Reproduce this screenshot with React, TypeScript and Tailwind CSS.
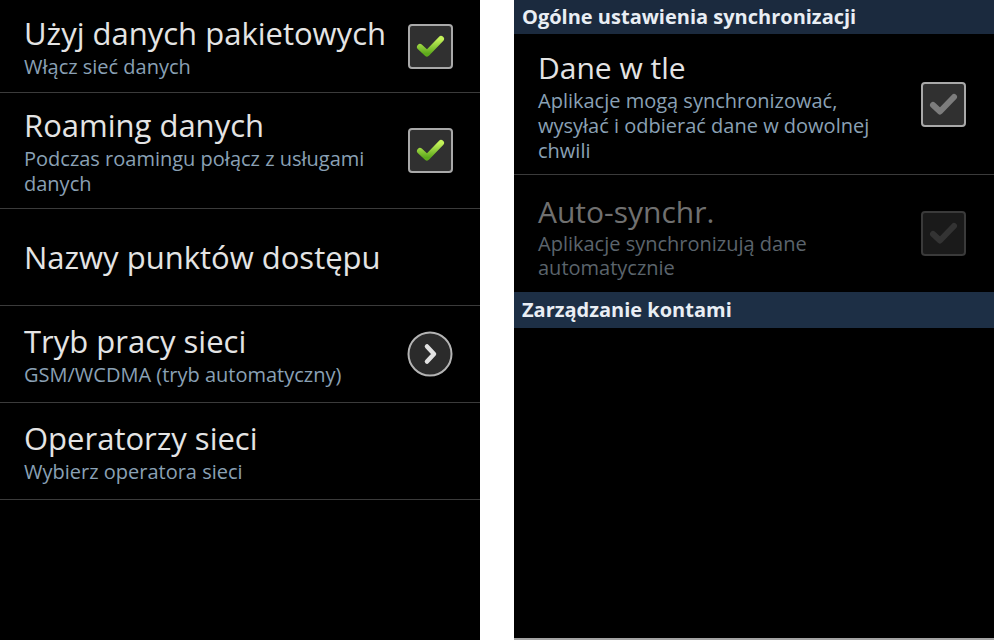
import React from "react";

type Tone = "green" | "gray" | "off";

const CheckBox = ({ tone }: { tone: Tone }) => {
  const box =
    tone === "off"
      ? "border-[#3a3a3a] bg-[#1a1a1a]"
      : "border-[#a9a9a9] bg-[#303030]";
  return (
    <div className={`w-[45px] h-[45px] shrink-0 rounded-[4px] border-2 ${box}`}>
      <svg width="41" height="41" viewBox="0 0 41 41">
        <defs>
          <linearGradient id="ok" x1="0" y1="0" x2="0" y2="1">
            <stop offset="0" stopColor="#c4f25a" />
            <stop offset="1" stopColor="#5ea91c" />
          </linearGradient>
        </defs>
        <polyline
          points="10,21 17,27.5 31,13"
          fill="none"
          stroke={tone === "green" ? "url(#ok)" : tone === "gray" ? "#7c7c7c" : "#333333"}
          strokeWidth="6"
          strokeLinecap="round"
          strokeLinejoin="round"
        />
      </svg>
    </div>
  );
};

const Chevron = () => (
  <svg width="46" height="46" viewBox="0 0 46 46" className="shrink-0">
    <circle cx="23" cy="23" r="21.5" fill="#2b2b2b" stroke="#b4b4b4" strokeWidth="2" />
    <polyline
      points="20,15.5 27,23 20,30.5"
      fill="none"
      stroke="#e2e2e2"
      strokeWidth="4.5"
      strokeLinecap="round"
      strokeLinejoin="round"
    />
  </svg>
);

const Row = ({
  height,
  title,
  lines = [],
  right,
}: {
  height: string;
  title: string;
  lines?: string[];
  right?: React.ReactNode;
}) => (
  <div className={`${height} flex items-center justify-between pl-6 pr-[27px] border-b border-[#3b3b3b]`}>
    <div className="flex flex-col">
      <div className="text-[31px] leading-[40px] text-[#e4e4e4] whitespace-nowrap">{title}</div>
      {lines.length > 0 && (
        <div className="mt-[1px] text-[20px] leading-[25px] text-[#8aa1b5]">
          {lines.map((l) => (
            <div key={l} className="whitespace-nowrap">
              {l}
            </div>
          ))}
        </div>
      )}
    </div>
    {right}
  </div>
);

export default function App() {
  return (
    <div
      className="w-[994px] h-[640px] flex bg-white overflow-hidden"
      style={{ fontFamily: '"Open Sans", "Noto Sans", sans-serif' }}
    >
      {/* left phone: mobile network settings */}
      <div className="w-[480px] h-full bg-black flex flex-col">
        <Row
          height="h-[93px]"
          title="Użyj danych pakietowych"
          lines={["Włącz sieć danych"]}
          right={<CheckBox tone="green" />}
        />
        <Row
          height="h-[116px]"
          title="Roaming danych"
          lines={["Podczas roamingu połącz z usługami", "danych"]}
          right={<CheckBox tone="green" />}
        />
        <Row height="h-[97px]" title="Nazwy punktów dostępu" />
        <Row
          height="h-[97px]"
          title="Tryb pracy sieci"
          lines={["GSM/WCDMA (tryb automatyczny)"]}
          right={<Chevron />}
        />
        <Row
          height="h-[97px]"
          title="Operatorzy sieci"
          lines={["Wybierz operatora sieci"]}
        />
      </div>

      <div className="w-[34px]" />

      {/* right phone: sync settings */}
      <div className="w-[480px] h-full bg-black flex flex-col border-b-2 border-[#a3a3a3]">
        <div className="h-[34px] bg-[#1b2a3e] pl-2 flex items-center text-[20px] font-bold text-[#e9eef4]">
          Ogólne ustawienia synchronizacji
        </div>
        <div className="h-[141px] flex items-center justify-between pl-6 pr-[28px] border-b border-[#3b3b3b]">
          <div className="flex flex-col pt-[3px]">
            <div className="text-[30px] leading-[40px] text-[#e4e4e4]">Dane w tle</div>
            <div className="text-[20px] leading-[25px] text-[#8aa1b5]">
              <div>Aplikacje mogą synchronizować,</div>
              <div>wysyłać i odbierać dane w dowolnej</div>
              <div>chwili</div>
            </div>
          </div>
          <CheckBox tone="gray" />
        </div>
        <div className="h-[117px] flex items-center justify-between pl-6 pr-[28px]">
          <div className="flex flex-col pt-[4px]">
            <div className="text-[30px] leading-[40px] text-[#707070]">Auto-synchr.</div>
            <div className="text-[20px] leading-[24px] text-[#5b646c]">
              <div>Aplikacje synchronizują dane</div>
              <div>automatycznie</div>
            </div>
          </div>
          <CheckBox tone="off" />
        </div>
        <div className="h-[36px] bg-[#1d2f45] pl-2 flex items-center text-[20px] font-bold text-[#e9eef4]">
          Zarządzanie kontami
        </div>
        <div className="flex-1" />
      </div>
    </div>
  );
}
